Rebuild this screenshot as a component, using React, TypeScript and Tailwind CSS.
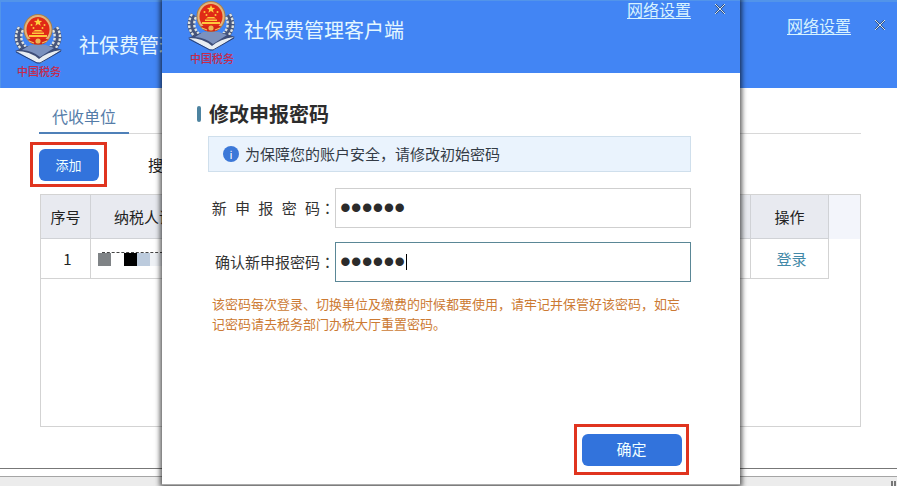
import type { ReactNode } from "react";

function CenteredMark({ children }: { children: ReactNode }) {
  return <span className="font-['Noto_Sans_CJK_TC',sans-serif]">{children}</span>;
}

function Emblem() {
  return (
    <svg viewBox="0 0 50 68" className="h-[68px] w-[50px] shrink-0" role="img" aria-label="中国税务">
      <g fill="none" stroke="#46557c" strokeWidth="7">
        <path d="M8 15C2 24 5 34 17 40" />
        <path d="M42 15C48 24 45 34 33 40" />
      </g>
      <g fill="none" stroke="#dfe3e0" strokeWidth="2.4" strokeDasharray="2.6 1.4">
        <path d="M6 14C0 24 3 35 16 42" />
        <path d="M44 14C50 24 47 35 34 42" />
        <path d="M10 17C6 25 9 33 19 38" />
        <path d="M40 17C44 25 41 33 31 38" />
      </g>
      <path d="M2 38L14 33L38 33L49 37L27 49Z" fill="#3d4d78" />
      <path d="M3 38Q17 38 26 46Q34 39 48 37L28 50L23 49Z" fill="#e8edf2" />
      <path d="M9 37L17 32L33 32L41 35L27 44Q20 38 9 37Z" fill="#7b91be" />
      <path d="M3 39L24 50L27 50L48 38" fill="none" stroke="#2c3f70" strokeWidth="1" />
      <ellipse cx="25" cy="16.500" rx="14.500" ry="15.500" fill="#a5804f" />
      <ellipse cx="25" cy="16.500" rx="13.500" ry="14.500" fill="#e5b377" />
      <ellipse cx="25" cy="16.500" rx="11.500" ry="12.500" fill="#e02a16" />
      <path d="M25 5l1.200 2.700 3 .2-2.300 1.900.8 2.900-2.700-1.600-2.600 1.600.8-2.900-2.300-1.900 3-.2z" fill="#ffd23e" />
      <g fill="#ffc83c">
        <circle cx="18.500" cy="12" r="1" />
        <circle cx="20.500" cy="15" r="1" />
        <circle cx="29.500" cy="15" r="1" />
        <circle cx="31.500" cy="12" r="1" />
        <path d="M20 18.500L22 17H28L30 18.500Z" />
        <path d="M19 19.500H31V21H19Z" />
        <path d="M16 22H34V24H16Z" />
      </g>
      <path d="M15 26H35L32 30Q25 33 18 30Z" fill="#d32516" />
      <circle cx="25" cy="28" r="2.600" fill="#efb552" />
      <path d="M16 28L21 30M34 28L29 30" stroke="#f0bd5c" strokeWidth="1.200" />
      <text
        x="4"
        y="63"
        className="fill-[#c52a4c] font-['Noto_Sans_CJK_SC',sans-serif] text-[11px] font-medium"
      >
        中国税务
      </text>
    </svg>
  );
}

function CloseButton() {
  return (
    <button type="button" aria-label="关闭" className="flex size-4 items-center justify-center">
      <svg viewBox="0 0 10 10" className="size-[10px]" fill="none">
        <path d="M0 0L10 10M10 0L0 10" stroke="#2c4468" strokeWidth="1.800" />
        <path d="M0 0L10 10M10 0L0 10" stroke="#d5e6f4" strokeWidth="1" />
      </svg>
    </button>
  );
}

function WindowTools() {
  return (
    <div className="flex items-center gap-[21px]">
      <a href="#network" className="text-[16px] leading-4 text-[#d8f3ff] underline underline-offset-2">
        网络设置
      </a>
      <CloseButton />
    </div>
  );
}

const ringed = "border-[3px] border-[#e0341f]";
const blueButton = "rounded-md bg-[#3273dc] text-[#f0ffff]";

function MainWindow() {
  return (
    <div className="flex min-h-screen flex-col bg-white">
      <header className="flex h-[88px] items-start justify-between border-t-2 border-l border-[#5294ea] bg-[#4285f4] pr-[9px] pl-3">
        <div className="flex items-center gap-4 pt-[11px]">
          <Emblem />
          <h1 className="-mt-1 text-[20px] leading-6 text-[#e4f7ff]">社保费管理客户端</h1>
        </div>
        <div className="pt-[15px]">
          <WindowTools />
        </div>
      </header>

      <main className="flex-1 pt-4 pr-9 pl-10">
        <nav className="flex border-b border-[#d8d8d8]">
          <a
            href="#units"
            className="-mb-px -ml-px border-b-2 border-[#4f80b8] px-[13px] pb-1 text-[16px] leading-6 text-[#557ca8]"
          >
            代收单位
          </a>
        </nav>
        <div className="-ml-[10px] flex items-center gap-[41px] pt-2">
          <div className={`flex h-[45px] w-[77px] items-center justify-center ${ringed}`}>
            <button type="button" className={`h-8 w-[60px] text-[13px] ${blueButton}`}>
              添加
            </button>
          </div>
          <span className="text-[15px] leading-5">搜索</span>
        </div>
        <div className="mt-[7px] h-[233px] border border-[#d3d3d3]">
          <table className="w-full table-fixed border-separate border-spacing-0 text-[15px] leading-5">
            <colgroup>
              <col className="w-[50px]" />
              <col />
              <col className="w-[78px]" />
              <col className="w-[31px]" />
            </colgroup>
            <thead>
              <tr className="h-11 bg-[#e8eaf0]">
                <th className="border-r border-b border-[#d0d2d6] font-normal">序号</th>
                <th className="border-r border-b border-[#d0d2d6] pl-[23px] text-left font-normal">纳税人识别号</th>
                <th className="border-r border-b border-[#d0d2d6] font-normal">操作</th>
                <td className="bg-[#f3f5fb]" />
              </tr>
            </thead>
            <tbody>
              <tr className="h-10">
                <td className="border-r border-b border-[#d3d3d3] pl-1 text-center">1</td>
                <td className="border-r border-b border-[#d3d3d3]">
                  <div className="ml-[7px] w-[65px]">
                    <div className="ml-1 border-t border-dashed border-[#444]" />
                    <div className="flex h-[13px]">
                      <span className="w-[13px] bg-[#7f8386]" />
                      <span className="w-[13px] bg-white" />
                      <span className="w-[13px] bg-black" />
                      <span className="w-[13px] bg-[#bccbdd]" />
                      <span className="w-[13px] bg-[#eef1f5]" />
                    </div>
                  </div>
                </td>
                <td className="border-r border-b border-[#d3d3d3] pl-1 text-center">
                  <a href="#login" className="text-[#4389a8]">
                    登录
                  </a>
                </td>
                <td />
              </tr>
            </tbody>
          </table>
        </div>
      </main>

      <footer className="border-t border-[#777]">
        <div className="mt-[7px] flex h-[10px] justify-end border-t border-[#a5a5a5] bg-[#ececec]">
          <span className="mt-1 mr-px w-[5px] border-x-2 border-[#777]" />
        </div>
      </footer>
    </div>
  );
}

interface PasswordRowProps {
  id: string;
  label: string;
  active?: boolean;
}

function PasswordRow({ id, label, active = false }: PasswordRowProps) {
  return (
    <div className="flex items-center">
      <label
        htmlFor={id}
        className="w-[127px] shrink-0 text-right font-['Liberation_Sans','Noto_Sans_CJK_SC',sans-serif] text-[15px] leading-5 whitespace-pre text-[#333]"
      >
        {label}
        <CenteredMark>：</CenteredMark>
      </label>
      <div className="relative flex-1">
        <input
          id={id}
          type="password"
          defaultValue="123456"
          className={`block h-10 w-full border bg-white px-1 pb-px font-['Liberation_Sans',sans-serif] text-[31px] leading-9 text-[#2b2b2b] caret-transparent outline-none ${
            active ? "border-[#5a8796]" : "border-[#cfcfcf]"
          }`}
        />
        {active && <span className="absolute top-3 left-[71px] h-4 w-px bg-black" />}
      </div>
    </div>
  );
}

function PasswordDialog() {
  return (
    <section
      role="dialog"
      aria-labelledby="dialog-title"
      className="absolute top-0 left-[162px] flex h-[485px] w-[578px] flex-col border-b border-[#aaa] bg-white shadow-[0_0_5px_2px_rgba(0,0,0,0.65)]"
    >
      <header className="flex h-[73px] shrink-0 items-start justify-between border-t border-[#5294ea] bg-[#4285f4] pr-3 pl-6">
        <div className="-mt-px flex items-center gap-2">
          <Emblem />
          <h2 className="-mt-2 text-[20px] leading-6 text-[#e4f7ff]">社保费管理客户端</h2>
        </div>
        <WindowTools />
      </header>

      <div className="flex flex-1 flex-col pt-[27px] pr-[49px] pl-[35px]">
        <div className="flex items-center gap-2">
          <span className="h-4 w-1 rounded-xs bg-[#4d83a0]" />
          <h3 id="dialog-title" className="text-[20px] leading-7 font-bold text-[#2c2c2c]">
            修改申报密码
          </h3>
        </div>
        <div className="mt-2 ml-[11px] flex h-9 items-center gap-[6px] border border-[#cfdfec] bg-[#eaf3fd] pl-[14px] text-[15px] text-[#333b46]">
          <span className="flex size-4 items-center justify-center rounded-full bg-[#3c78d8] text-[11px] leading-4 text-white">
            i
          </span>
          <p>为保障您的账户安全，请修改初始密码</p>
        </div>
        <form className="flex flex-1 flex-col pt-4 pl-[11px]">
          <div className="flex flex-col gap-[14px]">
            <PasswordRow id="new-password" label="新  申  报  密  码" />
            <PasswordRow id="confirm-password" label="确认新申报密码" active />
          </div>
          <p className="mt-3 ml-1 w-[470px] text-[13px] leading-5 text-[#cc7a33]">
            该密码每次登录、切换单位及缴费的时候都要使用，请牢记并保管好该密码，如忘记密码请去税务部门办税大厅重置密码。
          </p>
          <div
            className={`mt-auto mr-[2px] mb-[9px] flex h-[51px] w-[115px] items-center justify-center self-end ${ringed}`}
          >
            <button type="button" className={`h-8 w-[100px] text-[15px] ${blueButton}`}>
              确定
            </button>
          </div>
        </form>
      </div>
    </section>
  );
}

export default function App() {
  return (
    <div className="relative overflow-hidden font-['Noto_Sans_CJK_SC',sans-serif] text-[#222]">
      <MainWindow />
      <PasswordDialog />
    </div>
  );
}
